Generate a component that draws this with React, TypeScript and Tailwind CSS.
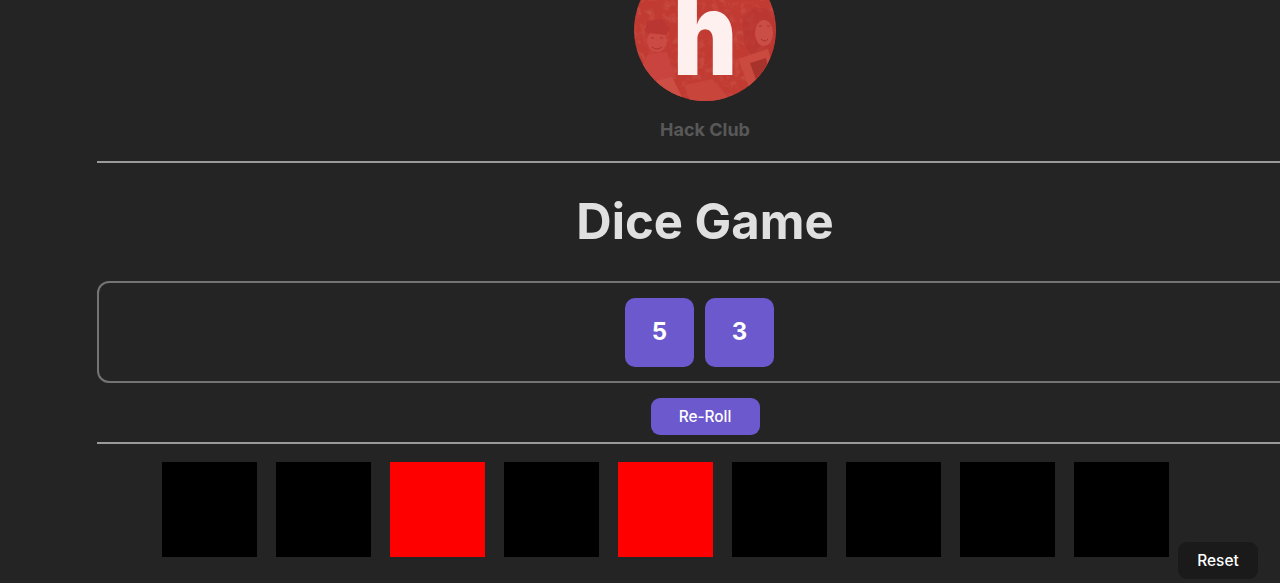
import * as React from "react";

const tiles = [false, false, true, false, true, false, false, false, false];

const Logo = () => {
  return (
    <svg viewBox="0 0 142 142" className="w-[142px] h-[142px] -mt-[41.5px] block">
      <defs>
        <clipPath id="logo-clip">
          <circle cx="71" cy="71" r="71" />
        </clipPath>
        <filter id="logo-grain" x="0" y="0" width="100%" height="100%">
          <feTurbulence type="fractalNoise" baseFrequency="0.14" numOctaves="3" seed="4" />
          <feColorMatrix values="0 0 0 0 0.85  0 0 0 0 0.36  0 0 0 0 0.32  1.6 0 0 0 -0.75" />
        </filter>
      </defs>
      <g clipPath="url(#logo-clip)">
        <rect width="142" height="142" fill="#c13b32" />
        <rect width="142" height="142" filter="url(#logo-grain)" opacity="0.3" />
        {/* crowd photo behind the letter */}
        <path d="M6 112 L14 95 L33 93 L40 114 L34 134 L12 128 Z" fill="#c9443f" />
        <ellipse cx="23" cy="82" rx="10" ry="11" fill="#cb4a44" />
        <path d="M17 79 h3 M26 79 h3 M18 88 q5 4 10 0" stroke="#a8352f" strokeWidth="1" fill="none" />
        <path d="M10 72 L14 62 L28 60 L36 70 L32 76 L14 74 Z" fill="#b93632" />
        <path d="M108 58 L122 48 L140 52 L142 96 L118 100 L110 84 Z" fill="#b53630" fillOpacity="0.6" />
        <ellipse cx="130" cy="74" rx="9" ry="13" fill="#cb4e46" />
        <path d="M125 67 h3 M133 67 h3 M127 80 q4 4 7 0" stroke="#a8352f" strokeWidth="1" fill="none" />
        <path d="M104 100 L134 90 L142 122 L118 136 Z" fill="#cb4a40" />
        <path d="M116 104 L132 99 L136 116 L122 121 Z" fill="#a8332c" />
        <path d="M50 126 L78 120 L98 142 L56 142 Z" fill="#c8453c" />
        <path d="M14 124 L38 118 L50 142 L22 142 Z" fill="#cd4e44" />
        <text
          transform="translate(71 116) scale(0.86 1)"
          textAnchor="middle"
          fontSize="115"
          fontWeight="900"
          fontFamily="Inter, sans-serif"
          fill="#fff0f0"
        >
          h
        </text>
      </g>
    </svg>
  );
};

const App = () => {
  return (
    <main className="relative w-[1280px] h-[583px] overflow-hidden bg-[#242424] font-['Inter',sans-serif]">
      <div className="w-[1216px] ml-[97px] flex flex-col items-center">
        <Logo />
        <p className="mt-[18.5px] text-[18px] leading-[21px] font-bold text-[#585858]">Hack Club</p>
        <hr className="w-full mt-[20.5px] border-0 h-[2px] bg-[#9a9a9a]" />
        <h1 className="mt-[30.5px] text-[49px] leading-[58px] font-bold text-[#e0e0e0]">Dice Game</h1>
        <div className="w-full mt-[30px] h-[102px] rounded-[12px] border-2 border-[#747474] flex items-center justify-center">
          <div className="w-[69px] h-[69px] mr-[11px] rounded-[10px] bg-[#6b59cd] flex items-center justify-center text-[24px] font-bold text-white">5</div>
          <div className="w-[69px] h-[69px] mr-[11px] rounded-[10px] bg-[#6b59cd] flex items-center justify-center text-[24px] font-bold text-white">3</div>
        </div>
        <button className="mt-[15px] w-[109px] h-[37px] pt-[1px] rounded-[9px] bg-[#6b59cd] text-[15.4px] font-medium text-white">Re-Roll</button>
        <hr className="w-full mt-[7px] border-0 h-[2px] bg-[#9a9a9a]" />
        <div className="self-start ml-[65px] mt-[18px] flex gap-[19px]">
          {tiles.map((red, i) => (
            <div key={i} className={red ? "w-[95px] h-[95px] bg-[#ff0000]" : "w-[95px] h-[95px] bg-black"} />
          ))}
        </div>
      </div>
      <button className="absolute left-[1178px] top-[542px] w-[80px] h-[37px] rounded-[9px] bg-[#1a1a1a] text-[15.4px] font-medium text-white">Reset</button>
    </main>
  );
};

export default App;
